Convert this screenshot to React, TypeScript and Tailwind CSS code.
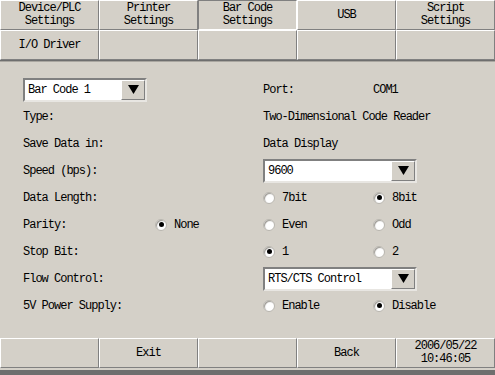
import type { ReactNode } from 'react'

const font = { fontFamily: '"Liberation Mono", "DejaVu Sans Mono", monospace' }

const raised = 'border-t border-l border-t-white border-l-white border-r border-b border-r-[#808080] border-b-[#808080]'
const sunken = 'border-t border-l border-t-[#808080] border-l-[#808080] border-r border-b border-r-white border-b-white'

function Tab({ children, active }: { children?: ReactNode; active?: boolean }) {
  return (
    <div
      className={`flex h-[30px] flex-col items-center justify-center bg-[#d4d0c8] text-center leading-[13px] ${
        active ? sunken : raised
      }`}
    >
      {children}
    </div>
  )
}

function Radio({ label, checked }: { label: string; checked?: boolean }) {
  return (
    <div className="flex items-center gap-[7px]">
      <span className="flex h-[12px] w-[12px] items-center justify-center rounded-full border border-[#b8b5ae] bg-white shadow-[inset_1px_1px_1px_#9c9993]">
        {checked && <span className="h-[5px] w-[5px] rounded-full bg-black" />}
      </span>
      <span>{label}</span>
    </div>
  )
}

function Select({ value, width }: { value: string; width: string }) {
  return (
    <div className={`flex h-[24px] ${width} border-2 border-t-[#808080] border-l-[#808080] border-r-[#e8e6e2] border-b-[#e8e6e2] bg-white`}>
      <div className="flex flex-1 items-center pl-[3px]">{value}</div>
      <div className={`flex w-[24px] items-center justify-center bg-[#d4d0c8] ${raised}`}>
        <svg width="11" height="9" viewBox="0 0 11 9">
          <polygon points="0,0 11,0 5.5,9" fill="black" />
        </svg>
      </div>
    </div>
  )
}

function Row({ children }: { children: ReactNode }) {
  return <div className="grid h-[27px] grid-cols-[132px_108px_110px_1fr] items-center">{children}</div>
}

export default function App() {
  return (
    <div
      className="flex h-[375px] w-[495px] flex-col overflow-hidden bg-[#d4d0c8] text-[12px] tracking-[-1px] text-black"
      style={font}
    >
      <div className="grid grid-cols-5">
        <Tab>
          <span>Device/PLC</span>
          <span>Settings</span>
        </Tab>
        <Tab>
          <span>Printer</span>
          <span>Settings</span>
        </Tab>
        <Tab active>
          <span>Bar Code</span>
          <span>Settings</span>
        </Tab>
        <Tab>USB</Tab>
        <Tab>
          <span>Script</span>
          <span>Settings</span>
        </Tab>
        <Tab>I/O Driver</Tab>
        <Tab />
        <Tab />
        <Tab />
        <Tab />
      </div>
      <div className="h-[2px] border-t border-t-[#6e6e6e] border-b border-b-[#a9a6a0]" />

      <div className="flex-1 pl-[23px] pt-[14px]">
        <Row>
          <div className="col-span-2">
            <Select value="Bar Code 1" width="w-[124px]" />
          </div>
          <div>Port:</div>
          <div>COM1</div>
        </Row>
        <Row>
          <div className="col-span-2">Type:</div>
          <div className="col-span-2">Two-Dimensional Code Reader</div>
        </Row>
        <Row>
          <div className="col-span-2">Save Data in:</div>
          <div className="col-span-2">Data Display</div>
        </Row>
        <Row>
          <div className="col-span-2">Speed (bps):</div>
          <div className="col-span-2">
            <Select value="9600" width="w-[154px]" />
          </div>
        </Row>
        <Row>
          <div className="col-span-2">Data Length:</div>
          <Radio label="7bit" />
          <Radio label="8bit" checked />
        </Row>
        <Row>
          <div>Parity:</div>
          <Radio label="None" checked />
          <Radio label="Even" />
          <Radio label="Odd" />
        </Row>
        <Row>
          <div className="col-span-2">Stop Bit:</div>
          <Radio label="1" checked />
          <Radio label="2" />
        </Row>
        <Row>
          <div className="col-span-2">Flow Control:</div>
          <div className="col-span-2">
            <Select value="RTS/CTS Control" width="w-[154px]" />
          </div>
        </Row>
        <Row>
          <div className="col-span-2">5V Power Supply:</div>
          <Radio label="Enable" />
          <Radio label="Disable" checked />
        </Row>
      </div>

      <div className="grid h-[32px] grid-cols-5">
        <Tab />
        <Tab>Exit</Tab>
        <Tab />
        <Tab>Back</Tab>
        <Tab>
          <span>2006/05/22</span>
          <span>10:46:05</span>
        </Tab>
      </div>
      <div className="h-[5px] bg-[#6e6e6e]" />
    </div>
  )
}
